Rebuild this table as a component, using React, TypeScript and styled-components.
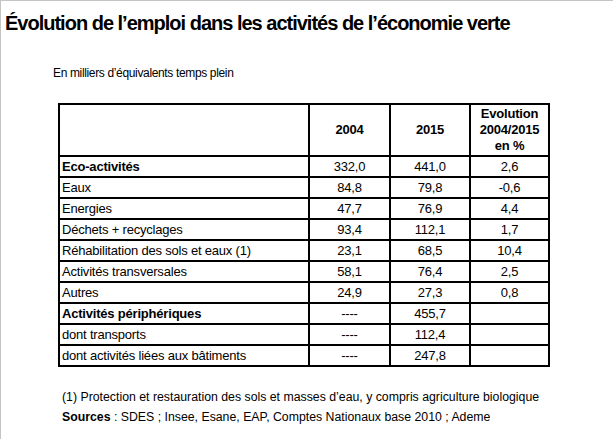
import React from "react";
import styled, { createGlobalStyle } from "styled-components";

const Global = createGlobalStyle`
  html, body { margin: 0; padding: 0; background: #fff; }
  body { font-family: "Liberation Sans", Arial, sans-serif; color: #000; }
`;

const Page = styled.div`
  width: 613px;
  height: 439px;
  box-sizing: border-box;
  border-top: 1px solid #c4c4c4;
  border-left: 1px solid #c4c4c4;
  display: flex;
  flex-direction: column;
`;

const Title = styled.h1`
  margin: 10px 0 0 4px;
  font-size: 20px;
  line-height: 24px;
  font-weight: bold;
  letter-spacing: -1px;
  white-space: nowrap;
`;

const Unit = styled.div`
  margin: 31px 0 0 52px;
  font-size: 12px;
  line-height: 14px;
  letter-spacing: -0.35px;
`;

const Table = styled.table`
  margin: 23px 0 0 57px;
  border-collapse: collapse;
  font-size: 13px;
  table-layout: fixed;
  width: 492px;
  letter-spacing: -0.2px;
`;

const Th = styled.th<{ $w?: number }>`
  border: 2px solid #000;
  height: 50px;
  padding: 0;
  font-weight: bold;
  text-align: center;
  line-height: 16px;
  width: ${(p) => (p.$w ? `${p.$w}px` : "auto")};
`;

const Td = styled.td<{ $label?: boolean; $bold?: boolean }>`
  border: 2px solid #000;
  height: 19px;
  padding: 0 0 0 ${(p) => (p.$label ? "2px" : "0")};
  line-height: 19px;
  text-align: ${(p) => (p.$label ? "left" : "center")};
  font-weight: ${(p) => (p.$bold ? "bold" : "normal")};
  white-space: nowrap;
`;

const Notes = styled.div`
  margin: 20px 0 0 61px;
  font-size: 12.3px;
  line-height: 20px;
`;

const rows: { label: string; bold?: boolean; a: string; b: string; c: string }[] = [
  { label: "Eco-activités", bold: true, a: "332,0", b: "441,0", c: "2,6" },
  { label: "Eaux", a: "84,8", b: "79,8", c: "-0,6" },
  { label: "Energies", a: "47,7", b: "76,9", c: "4,4" },
  { label: "Déchets + recyclages", a: "93,4", b: "112,1", c: "1,7" },
  { label: "Réhabilitation des sols et eaux (1)", a: "23,1", b: "68,5", c: "10,4" },
  { label: "Activités transversales", a: "58,1", b: "76,4", c: "2,5" },
  { label: "Autres", a: "24,9", b: "27,3", c: "0,8" },
  { label: "Activités périphériques", bold: true, a: "----", b: "455,7", c: "" },
  { label: "dont transports", a: "----", b: "112,4", c: "" },
  { label: "dont activités liées aux bâtiments", a: "----", b: "247,8", c: "" },
];

export default function App() {
  return (
    <>
      <Global />
      <Page>
        <Title>Évolution de l’emploi dans les activités de l’économie verte</Title>
        <Unit>En milliers d’équivalents temps plein</Unit>
        <Table>
          <thead>
            <tr>
              <Th $w={248} />
              <Th $w={79}>2004</Th>
              <Th $w={78}>2015</Th>
              <Th $w={77}>
                Evolution
                <br />
                2004/2015
                <br />
                en %
              </Th>
            </tr>
          </thead>
          <tbody>
            {rows.map((r) => (
              <tr key={r.label}>
                <Td $label $bold={r.bold}>{r.label}</Td>
                <Td>{r.a}</Td>
                <Td>{r.b}</Td>
                <Td>{r.c}</Td>
              </tr>
            ))}
          </tbody>
        </Table>
        <Notes>
          (1) Protection et restauration des sols et masses d’eau, y compris agriculture biologique
          <br />
          <b>Sources</b> : SDES ; Insee, Esane, EAP, Comptes Nationaux base 2010 ; Ademe
        </Notes>
      </Page>
    </>
  );
}
